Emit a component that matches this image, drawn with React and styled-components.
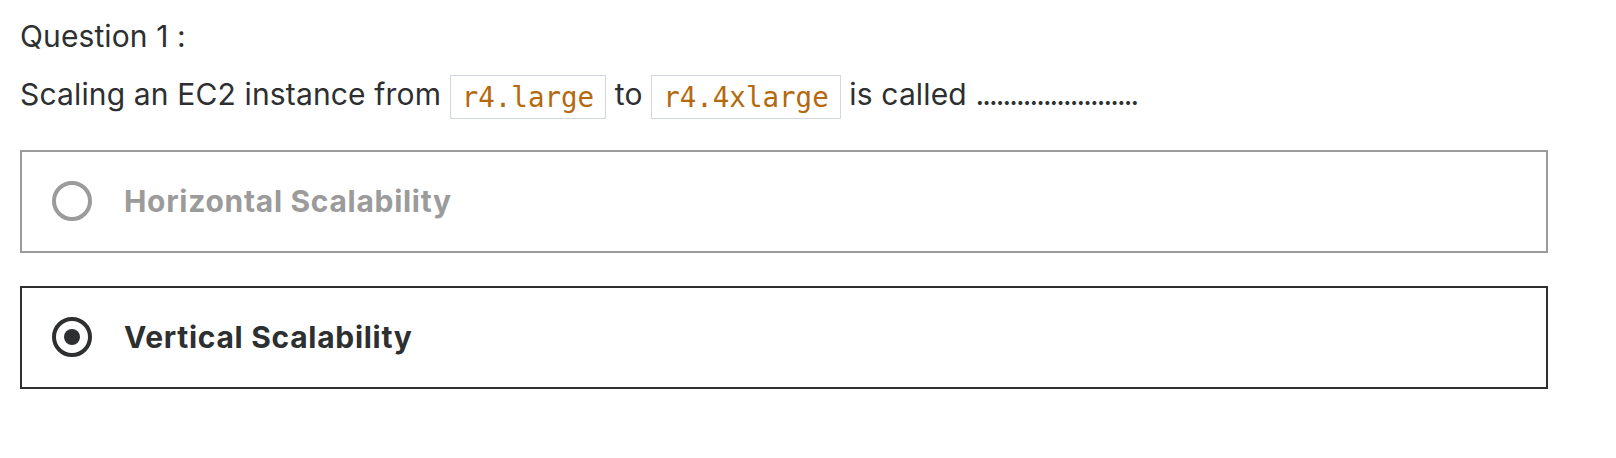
import React from 'react';
import styled, { createGlobalStyle } from 'styled-components';

const GlobalStyle = createGlobalStyle`
  body {
    margin: 0;
    background: #fff;
    font-family: Inter, "Noto Sans", sans-serif;
    color: #2d2f31;
  }
`

const Page = styled.div`
  width: 1528px;
  padding: 15px 20px 0;
`

const Title = styled.div`
  font-size: 30px;
  line-height: 42px;
  letter-spacing: 0.1px;
`

const Prompt = styled.div`
  margin-top: 14px;
  font-size: 30px;
  line-height: 46px;
  letter-spacing: 0.15px;
`

const Code = styled.code`
  display: inline-block;
  font-family: "DejaVu Sans Mono", monospace;
  font-size: 27.5px;
  line-height: 42px;
  color: #b4690e;
  border: 1px solid #d1d7dc;
  padding: 0 11px;
  vertical-align: middle;
  letter-spacing: 0;
`

const Blank = styled.span`
  letter-spacing: -1.9px;
`

const Options = styled.div`
  margin-top: 31px;
  display: flex;
  flex-direction: column;
  gap: 33px;
`

const Option = styled.label`
  display: flex;
  align-items: center;
  gap: 32px;
  height: 103px;
  box-sizing: border-box;
  padding: 0 30px;
  border: 2px solid ${p => (p.$selected ? '#2d2f31' : '#9b9b9b')};
  color: ${p => (p.$selected ? '#2d2f31' : '#9b9b9b')};
  font-size: 30px;
  font-weight: 700;
  letter-spacing: 0.7px;
  cursor: pointer;
`

const Radio = styled.span`
  width: 40px;
  height: 40px;
  box-sizing: border-box;
  border-radius: 50%;
  border: 4px solid currentColor;
  display: flex;
  align-items: center;
  justify-content: center;
  flex-shrink: 0;

  &::after {
    content: '';
    display: ${p => (p.$checked ? 'block' : 'none')};
    width: 16px;
    height: 16px;
    border-radius: 50%;
    background: currentColor;
  }
`

const answers = [
  { id: 'h', text: 'Horizontal Scalability' },
  { id: 'v', text: 'Vertical Scalability' },
];

export default function App() {
  const [picked, setPicked] = React.useState('v');

  return (
    <>
      <GlobalStyle />
      <Page>
        <Title>Question 1 :</Title>
        <Prompt>
          Scaling an EC2 instance from <Code>r4.large</Code> to <Code>r4.4xlarge</Code> is called <Blank>........................</Blank>
        </Prompt>
        <Options>
          {answers.map(a => (
            <Option key={a.id} $selected={picked === a.id} onClick={() => setPicked(a.id)}>
              <Radio $checked={picked === a.id} />
              {a.text}
            </Option>
          ))}
        </Options>
      </Page>
    </>
  )
}
